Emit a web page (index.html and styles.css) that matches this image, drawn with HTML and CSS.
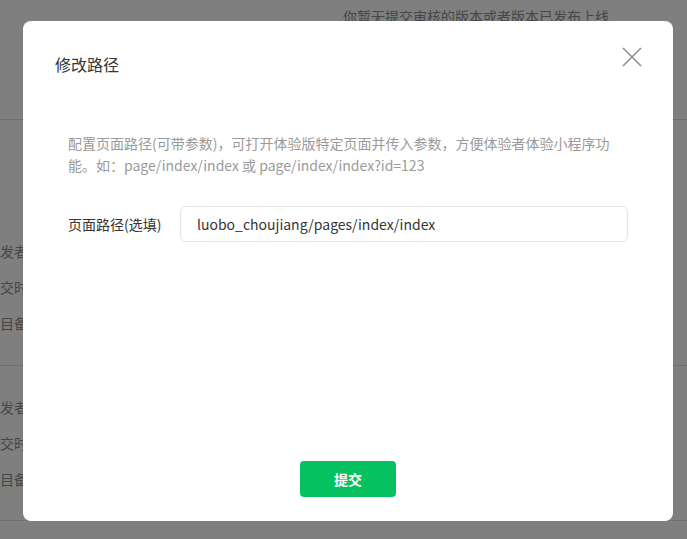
FILE: index.html
```html
<!DOCTYPE html>
<html lang="zh-CN">
<head>
<meta charset="utf-8">
<title>修改路径</title>
<link rel="stylesheet" href="styles.css">
</head>
<body>
<div class="page">
  <section class="sec sec-top">
    <p class="notice">你暂无提交审核的版本或者版本已发布上线</p>
  </section>
  <section class="sec sec-mid">
    <div class="row"><span class="k">开发者</span></div>
    <div class="row"><span class="k">提交时间</span></div>
    <div class="row"><span class="k">项目备注</span></div>
  </section>
  <section class="sec sec-bot">
    <div class="row"><span class="k">开发者</span></div>
    <div class="row"><span class="k">提交时间</span></div>
    <div class="row"><span class="k">项目备注</span></div>
  </section>
</div>
<div class="mask"></div>
<div class="dialog">
  <div class="dialog-hd">
    <h3 class="dialog-title">修改路径</h3>
    <button class="close" aria-label="关闭">
      <svg width="20" height="20" viewBox="0 0 20 20"><path d="M1 1L19 19M19 1L1 19" stroke="#8a8a8a" stroke-width="1.5" fill="none"/></svg>
    </button>
  </div>
  <div class="dialog-bd">
    <p class="desc">配置页面路径(可带参数)，可打开体验版特定页面并传入参数，方便体验者体验小程序功能。如：page/index/index 或 page/index/index?id=123</p>
    <div class="field">
      <label class="field-label">页面路径(选填)</label>
      <div class="input">luobo_choujiang/pages/index/index</div>
    </div>
  </div>
  <div class="dialog-ft">
    <button class="btn-primary">提交</button>
  </div>
</div>
</body>
</html>
```
FILE: styles.css
```css
html, body {
  margin: 0;
  padding: 0;
}
body {
  width: 687px;
  height: 539px;
  overflow: hidden;
  position: relative;
  background: #fff;
  font-family: "Noto Sans CJK SC", "Noto Sans", sans-serif;
  font-size: 14px;
  color: #333;
}
.page {
  display: flex;
  flex-direction: column;
}
.sec {
  border-bottom: 1px solid #dedede;
  box-sizing: border-box;
}
.sec-top {
  height: 120px;
  padding-left: 343px;
}
.notice {
  margin: 6px 0 0;
  line-height: 20px;
  color: #8c8c8c;
}
.sec-mid {
  height: 246px;
  padding-top: 113px;
}
.sec-bot {
  height: 155px;
  padding-top: 23px;
}
.row {
  height: 36px;
  line-height: 36px;
  margin-left: -14px;
  color: #8c8c8c;
}
.mask {
  position: absolute;
  inset: 0;
  background: rgba(0, 0, 0, 0.5);
}
.dialog {
  position: absolute;
  left: 23px;
  top: 21px;
  width: 650px;
  height: 500px;
  background: #fff;
  border-radius: 8px;
  display: flex;
  flex-direction: column;
  box-sizing: border-box;
}
.dialog-hd {
  display: flex;
  justify-content: space-between;
  align-items: flex-start;
  padding: 31px 31px 0 32px;
}
.dialog-title {
  margin: 0;
  font-size: 16px;
  font-weight: normal;
  line-height: 24px;
  color: #353535;
}
.close {
  border: 0;
  background: none;
  padding: 0;
  margin-top: -5px;
  width: 20px;
  height: 20px;
  cursor: pointer;
}
.close svg {
  display: block;
}
.dialog-bd {
  padding: 56px 45px 0;
}
.desc {
  margin: 0;
  line-height: 22px;
  color: #9a9a9a;
  max-width: 550px;
}
.field {
  display: flex;
  align-items: center;
  margin-top: 30px;
}
.field-label {
  width: 112px;
  flex: none;
  color: #353535;
}
.input {
  flex: 1;
  height: 36px;
  box-sizing: border-box;
  border: 1px solid #e4e4e4;
  border-radius: 6px;
  padding: 0 16px;
  line-height: 34px;
  color: #353535;
}
.dialog-ft {
  margin-top: auto;
  padding-bottom: 24px;
  display: flex;
  justify-content: center;
}
.btn-primary {
  width: 96px;
  height: 36px;
  border: 0;
  border-radius: 4px;
  background: #07c160;
  color: #fff;
  font-family: inherit;
  font-size: 14px;
  font-weight: bold;
}
```
